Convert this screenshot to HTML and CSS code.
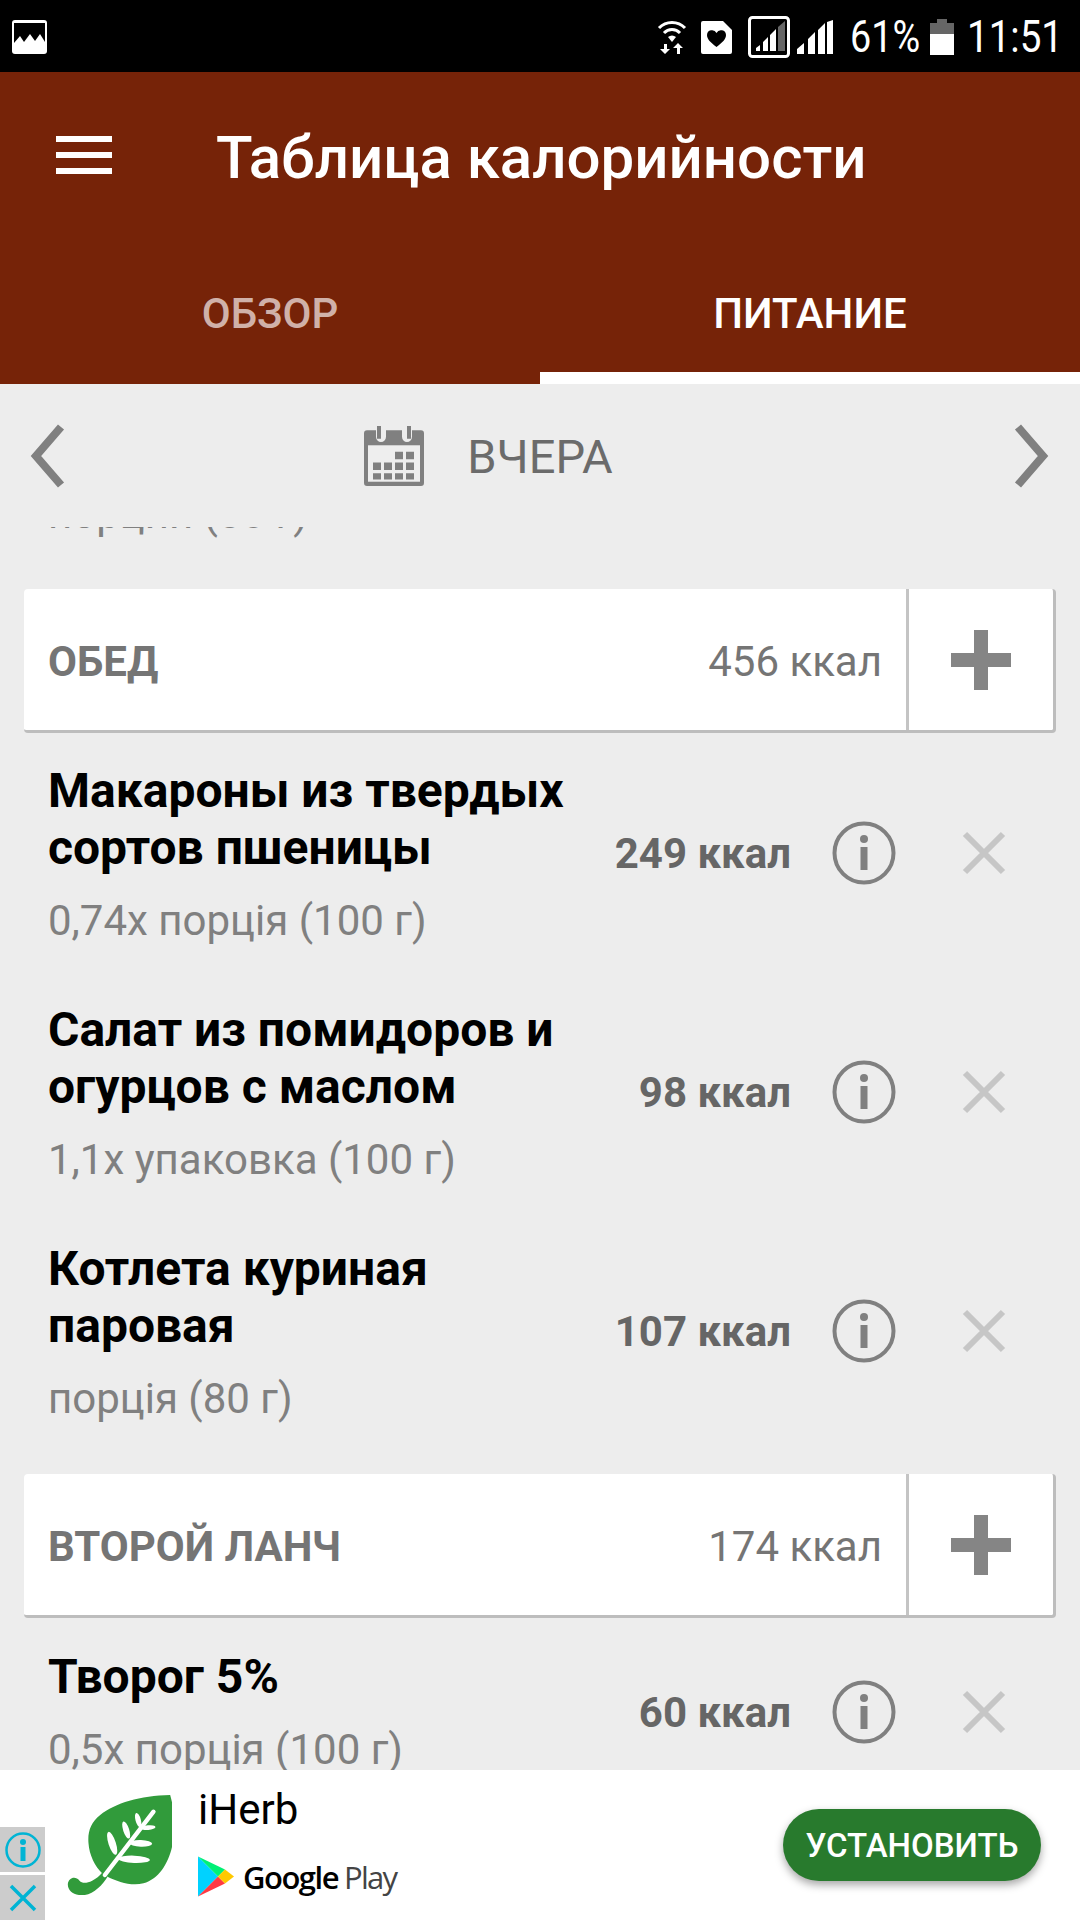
FILE: index.html
```html
<!DOCTYPE html>
<html lang="ru">
<head>
<meta charset="utf-8">
<title>Таблица калорийности</title>
<link rel="stylesheet" href="styles.css">
</head>
<body>
<div class="screen">
  <div class="status">
    <svg width="35" height="34" viewBox="0 0 35 34"><rect width="35" height="34" rx="3" fill="#fff"/><path fill="#000" d="M2 3h31v19l-5-8-5 7-5-7-6 8-4-6-6 7z"/></svg>
    <div class="status-right">
      <svg class="st-wifi" width="30" height="34" viewBox="0 0 30 34"><g fill="none" stroke="#fff" stroke-width="3"><path d="M2 8a18 18 0 0 1 26 0"/><path d="M7 13a11 11 0 0 1 16 0"/></g><path fill="#fff" d="M11 17a6 6 0 0 1 8 0l-4 5z"/><path fill="#fff" d="M7 24h3v5h3l-5 5-5-5h4zM21 23l5 5h-3v6h-3v-6h-4z"/></svg>
      <svg class="st-sim" width="31" height="33" viewBox="0 0 31 33"><path fill="#fff" d="M2 0h20l9 9v22a2 2 0 0 1-2 2H2a2 2 0 0 1-2-2V2a2 2 0 0 1 2-2z"/><path fill="#000" d="M15.500 26C9 21 6 18 6 14a5 5 0 0 1 9.500-2A5 5 0 0 1 25 14c0 4-3 7-9.500 12z"/></svg>
      <svg class="st-box" width="42" height="42" viewBox="0 0 42 42"><rect x="1.500" y="1.500" width="39" height="39" rx="3" fill="#000" stroke="#fff" stroke-width="3"/><path fill="#fff" d="M8 35v-3l4-3v6zM15 35v-9l5-5v14zM22 35V19l6-6v22z"/><path fill="#666" d="M30 35V11l7-6v30z"/></svg>
      <svg class="st-sig" width="36" height="34" viewBox="0 0 36 34"><path fill="#fff" d="M0 34v-5l7-6v11zM11 34V19l7-7v22zM21 34V10l7-7v31zM30 34V2l6-2v34z"/></svg>
      <span class="st-pct"><span>61%</span></span>
      <svg class="st-bat" width="24" height="36" viewBox="0 0 24 36"><path fill="#666" d="M7 0h10v4h7v11H0V4h7z"/><rect y="15" width="24" height="21" fill="#fff"/></svg>
      <span class="st-time"><span>11:51</span></span>
    </div>
  </div>

  <header class="appbar">
    <div class="title-row">
      <div class="burger"><i></i><i></i><i></i></div>
      <h1>Таблица калорийности</h1>
    </div>
    <nav class="tabs">
      <div class="tab">ОБЗОР</div>
      <div class="tab active">ПИТАНИЕ</div>
    </nav>
  </header>

  <div class="datebar">
    <svg width="36" height="64" viewBox="0 0 36 64"><path d="M31 3 6 32l25 29" fill="none" stroke="#808080" stroke-width="8"/></svg>
    <div class="date">
      <svg width="60" height="60" viewBox="0 2 60 56" preserveAspectRatio="none"><path fill="#808080" d="M3 6h9v6a5 5 0 0 0 10 0V6h16v6a5 5 0 0 0 10 0V6h9a3 3 0 0 1 3 3v46a3 3 0 0 1-3 3H3a3 3 0 0 1-3-3V9a3 3 0 0 1 3-3z"/><rect x="4" y="20" width="52" height="34" fill="#eee"/><path fill="#808080" d="M13 2h4v12h-4zM43 2h4v12h-4z"/><path fill="#808080" d="M31 26h8v7h-8zM42 26h8v7h-8zM9 36h8v7H9zM20 36h8v7h-8zM31 36h8v7h-8zM42 36h8v7h-8zM9 46h8v6H9zM20 46h8v6h-8zM31 46h8v6h-8zM42 46h8v6h-8z"/></svg>
      <span class="date-label">ВЧЕРА</span>
    </div>
    <svg width="36" height="64" viewBox="0 0 36 64"><path d="M5 3l25 29L5 61" fill="none" stroke="#808080" stroke-width="8"/></svg>
  </div>

  <main class="list">
    <div class="clipped"><div class="clipped-text">порции (80 г)</div></div>

    <section class="meal">
      <div class="meal-main"><span class="meal-name">ОБЕД</span><span class="meal-kcal">456 ккал</span></div>
      <div class="meal-add"><svg width="60" height="60" viewBox="0 0 60 60"><path fill="#858585" d="M23 0h14v23h23v14H37v23H23V37H0V23h23z"/></svg></div>
    </section>

    <article class="item">
      <div class="item-text"><div class="item-name">Макароны из твердых<br>сортов пшеницы</div><div class="item-portion">0,74x порція (100 г)</div></div>
      <div class="item-kcal">249 ккал</div>
      <svg width="64" height="64" viewBox="0 0 64 64"><circle cx="32" cy="32" r="29.500" fill="none" stroke="#808080" stroke-width="4"/><circle cx="32" cy="18" r="4" fill="#808080"/><rect x="28.500" y="26" width="7" height="23" fill="#808080"/></svg>
      <svg class="del" width="44" height="44" viewBox="0 0 44 44"><path d="M3 3l38 38M41 3 3 41" stroke="#c6c6c6" stroke-width="6"/></svg>
    </article>
    <article class="item">
      <div class="item-text"><div class="item-name">Салат из помидоров и<br>огурцов с маслом</div><div class="item-portion">1,1x упаковка (100 г)</div></div>
      <div class="item-kcal">98 ккал</div>
      <svg width="64" height="64" viewBox="0 0 64 64"><circle cx="32" cy="32" r="29.500" fill="none" stroke="#808080" stroke-width="4"/><circle cx="32" cy="18" r="4" fill="#808080"/><rect x="28.500" y="26" width="7" height="23" fill="#808080"/></svg>
      <svg class="del" width="44" height="44" viewBox="0 0 44 44"><path d="M3 3l38 38M41 3 3 41" stroke="#c6c6c6" stroke-width="6"/></svg>
    </article>
    <article class="item">
      <div class="item-text"><div class="item-name">Котлета куриная<br>паровая</div><div class="item-portion">порція (80 г)</div></div>
      <div class="item-kcal">107 ккал</div>
      <svg width="64" height="64" viewBox="0 0 64 64"><circle cx="32" cy="32" r="29.500" fill="none" stroke="#808080" stroke-width="4"/><circle cx="32" cy="18" r="4" fill="#808080"/><rect x="28.500" y="26" width="7" height="23" fill="#808080"/></svg>
      <svg class="del" width="44" height="44" viewBox="0 0 44 44"><path d="M3 3l38 38M41 3 3 41" stroke="#c6c6c6" stroke-width="6"/></svg>
    </article>

    <section class="meal meal-second">
      <div class="meal-main"><span class="meal-name">ВТОРОЙ ЛАНЧ</span><span class="meal-kcal">174 ккал</span></div>
      <div class="meal-add"><svg width="60" height="60" viewBox="0 0 60 60"><path fill="#858585" d="M23 0h14v23h23v14H37v23H23V37H0V23h23z"/></svg></div>
    </section>

    <article class="item item-short">
      <div class="item-text"><div class="item-name">Творог 5%</div><div class="item-portion">0,5x порція (100 г)</div></div>
      <div class="item-kcal">60 ккал</div>
      <svg width="64" height="64" viewBox="0 0 64 64"><circle cx="32" cy="32" r="29.500" fill="none" stroke="#808080" stroke-width="4"/><circle cx="32" cy="18" r="4" fill="#808080"/><rect x="28.500" y="26" width="7" height="23" fill="#808080"/></svg>
      <svg class="del" width="44" height="44" viewBox="0 0 44 44"><path d="M3 3l38 38M41 3 3 41" stroke="#c6c6c6" stroke-width="6"/></svg>
    </article>
  </main>

  <aside class="ad">
    <div class="ad-side">
      <div class="ad-btn"><svg width="36" height="36" viewBox="0 0 36 36"><circle cx="18" cy="18" r="16.500" fill="none" stroke="#00b4d4" stroke-width="2.500"/><circle cx="18" cy="10" r="3" fill="#00b4d4"/><rect x="15.500" y="15" width="5" height="14" fill="#00b4d4"/></svg></div>
      <div class="ad-btn"><svg width="30" height="30" viewBox="0 0 30 30"><path d="M3 3l24 24M27 3 3 27" stroke="#00b4d4" stroke-width="3.500"/></svg></div>
    </div>
    <svg class="leaf" width="106" height="100" viewBox="193 105 307 300"><path fill="#319b3b" d="M500 105c-90 2-165 24-210 60-28 22-38 50-35 85 2 35 20 70 41 90l16 10c30 14 70 30 108 20 60-18 90-90 92-160 1-40-2-70-12-105z"/><path fill="#319b3b" d="M193 372c2-18 22-26 35-10 8 9 22 8 38 0 12-6 22-15 30-24l16 12c-14 24-40 50-68 55-30 4-52-12-51-33z"/><path d="M304 345 450 155" stroke="#fff" stroke-width="13" fill="none" stroke-linecap="round"/><g fill="#fff"><ellipse cx="404" cy="180" rx="22" ry="8" transform="rotate(75 404 180)"/><ellipse cx="434" cy="203" rx="22" ry="7" transform="rotate(-6 434 203)"/><ellipse cx="368" cy="210" rx="27" ry="9" transform="rotate(72 368 210)"/><ellipse cx="412" cy="250" rx="34" ry="10" transform="rotate(2 412 250)"/><ellipse cx="326" cy="250" rx="36" ry="11" transform="rotate(72 326 250)"/><ellipse cx="392" cy="298" rx="47" ry="11" transform="rotate(2 392 298)"/></g></svg>
    <div class="ad-info">
      <div class="ad-name">iHerb</div>
      <div class="gplay">
        <svg width="36" height="41" viewBox="0 0 36 40"><path fill="#00d2ff" d="M0 0v40l20-20z"/><path fill="#00f076" d="M0 0l20 20 7-7z"/><path fill="#ff3a44" d="M0 40l20-20 7 7z"/><path fill="#ffc900" d="M27 13l9 7-9 7-7-7z"/></svg>
        <span class="gp-google">Google</span><span class="gp-play">Play</span>
      </div>
    </div>
    <button class="install">УСТАНОВИТЬ</button>
  </aside>
</div>
</body>
</html>
```
FILE: styles.css
```css
* { box-sizing: border-box; }
html, body { margin: 0; padding: 0; }
body { font-family: Roboto, "Liberation Sans", sans-serif; background: #ededed; }
.screen { width: 1080px; height: 1920px; display: flex; flex-direction: column; overflow: hidden; position: relative; background: #ededed; }
svg { display: block; flex: none; }

.status { height: 72px; flex: none; background: #000; display: flex; align-items: center; justify-content: space-between; padding: 2px 17px 0 12px; }
.status-right { display: flex; align-items: center; }
.st-sim { margin-left: 14px; }
.st-box { margin-left: 16px; }
.st-sig { margin-left: 7px; }
.st-pct, .st-time { display: block; color: #fff; font-size: 45px; line-height: 50px; white-space: nowrap; }
.st-pct span, .st-time span { display: inline-block; transform-origin: left center; }
.st-pct { width: 70px; margin-left: 17px; }
.st-pct span { transform: scaleX(.84); }
.st-bat { margin-left: 10px; }
.st-time { width: 96px; margin-left: 13px; }
.st-time span { transform: scaleX(.857); }

.appbar { height: 312px; flex: none; background: #762308; display: flex; flex-direction: column; }
.title-row { height: 170px; display: flex; align-items: center; padding-left: 56px; }
.burger { width: 56px; display: flex; flex-direction: column; gap: 10px; margin: -4px 104px 0 0; }
.burger i { display: block; height: 6px; background: #fff; }
h1 { margin: 0; color: #fff; font-size: 60px; font-weight: 500; }
.tabs { flex: 1; display: flex; }
.tab { flex: 1; display: flex; align-items: center; justify-content: center; color: #d0b1a9; font-size: 42px; font-weight: 500; }
.tab.active { color: #fff; border-bottom: 12px solid #fff; padding-top: 12px; }

.datebar { height: 143px; flex: none; display: flex; align-items: center; justify-content: space-between; padding: 0 31px 0 30px; }
.date { display: flex; align-items: center; gap: 43px; color: #6b6b6b; font-size: 47px; margin-right: 102px; }
.date-label { padding-top: 2px; }

.list { flex: 1; overflow: hidden; display: flex; flex-direction: column; }
.clipped { height: 62px; flex: none; overflow: hidden; }
.clipped-text { margin-top: -35px; padding-left: 48px; color: #808080; font-size: 42px; line-height: 44px; }
.meal { margin: 0 24px; flex: none; height: 144px; background: #fff; display: flex; border-radius: 4px; border-bottom: 3px solid #bdbdbd; border-right: 3px solid #bdbdbd; }
.meal-second { margin-top: 24px; }
.meal-main { flex: 1; display: flex; align-items: center; justify-content: space-between; padding: 3px 24px 0; border-right: 3px solid #c4c4c4; }
.meal-name { font-size: 42px; font-weight: 700; color: #757575; }
.meal-kcal { font-size: 42px; color: #757575; }
.meal-add { width: 144px; display: flex; align-items: center; justify-content: center; }
.item { flex: none; height: 239px; display: flex; align-items: center; padding: 0 74px 0 48px; }
.item-short { height: 187px; }
.item-short .item-text { padding-bottom: 4px; }
.item-text { flex: 1; }
.item-name { font-size: 48px; font-weight: 700; color: #000; line-height: 57px; }
.item-portion { font-size: 42px; color: #808080; margin-top: 23px; line-height: 44px; }
.item-kcal { font-size: 42px; font-weight: 700; color: #666; margin-right: 41px; padding-top: 2px; }
.del { margin-left: 66px; }

.ad { position: absolute; left: 0; right: 0; bottom: 0; height: 150px; background: #fff; display: flex; align-items: flex-start; }
.ad-side { position: absolute; left: 0; bottom: 0; width: 45px; display: flex; flex-direction: column; gap: 3px; }
.ad-btn { height: 45px; background: #ccc; display: flex; align-items: center; justify-content: center; }
.leaf { margin: 25px 0 0 66px; }
.ad-info { margin-left: 26px; padding-top: 15px; display: flex; flex-direction: column; gap: 21px; }
.ad-name { font-size: 42px; line-height: 50px; color: #000; }
.gplay { display: flex; align-items: center; height: 41px; }
.gp-google { font-family: "Open Sans", sans-serif; font-size: 31px; font-weight: 600; color: #000; margin-left: 9px; letter-spacing: -1.500px; }
.gp-play { font-family: "Open Sans", sans-serif; font-size: 31px; font-weight: 500; color: #444; margin-left: 6px; letter-spacing: -1.750px; }
.install { position: absolute; right: 39px; top: 39px; width: 258px; height: 72px; border: 0; border-radius: 36px; background: #287a2d; color: #fff; font-family: Roboto, sans-serif; font-size: 33px; font-weight: 500; box-shadow: 0 4px 8px rgba(0,0,0,.35); }
```
